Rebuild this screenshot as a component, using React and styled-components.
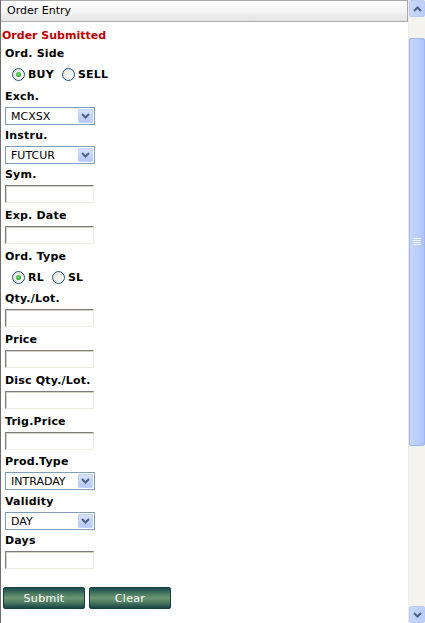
import React from 'react';
import styled, { createGlobalStyle } from 'styled-components';

const GlobalStyle = createGlobalStyle`
  html, body {
    margin: 0;
    padding: 0;
    background: #fff;
    overflow: hidden;
  }
  body {
    font-family: "DejaVu Sans", Verdana, sans-serif;
    font-size: 11px;
  }
`;

const Frame = styled.div`
  display: flex;
  width: 425px;
  height: 623px;
  overflow: hidden;
`;

const Panel = styled.div`
  flex: 1;
  display: flex;
  flex-direction: column;
  border-left: 1px solid #6d6d6d;
  min-width: 0;
`;

const Header = styled.div`
  height: 20px;
  line-height: 20px;
  padding-left: 6px;
  font-size: 11px;
  color: #000;
  background: linear-gradient(#ffffff 0%, #f4f4f4 50%, #e2e2e2 100%);
  border: 1px solid #a8a8a8;
  border-left: none;
`;

const Form = styled.div`
  display: flex;
  flex-direction: column;
  align-items: flex-start;
  padding-left: 4px;
`;

const Status = styled.div`
  margin: 7px 0 0 -3px;
  line-height: 14px;
  font-weight: bold;
  font-size: 11px;
  color: #c00000;
`;

const Label = styled.div`
  margin-top: ${p => p.$top ?? 6}px;
  line-height: 14px;
  font-weight: bold;
  letter-spacing: 0.2px;
  color: #000;
`;

const RadioRow = styled.div`
  display: flex;
  align-items: center;
  height: 16px;
  margin-top: ${p => p.$top ?? 6}px;
  padding-left: 7px;
`;

const RadioItem = styled.label`
  display: flex;
  align-items: center;
  gap: 3px;
  margin-right: 8px;
  font-weight: bold;
  letter-spacing: 0.2px;
`;

const RadioDot = styled.span`
  position: relative;
  box-sizing: border-box;
  width: 13px;
  height: 13px;
  border-radius: 50%;
  border: 1px solid #1d5281;
  background: radial-gradient(circle at 70% 70%, #ffffff 0%, #eceae3 60%, #dcd9cf 100%);
  &::after {
    content: '';
    display: ${p => (p.$checked ? 'block' : 'none')};
    position: absolute;
    left: 3px;
    top: 3px;
    width: 5px;
    height: 5px;
    border-radius: 50%;
    background: radial-gradient(circle at 40% 40%, #7be17b 0%, #2ca52c 70%, #21a121 100%);
  }
`;

const Select = styled.div`
  box-sizing: border-box;
  display: flex;
  align-items: center;
  justify-content: space-between;
  width: 90px;
  height: 18px;
  margin-top: 3px;
  border: 1px solid #7f9db9;
  background: #fff;
  padding: 1px;
`;

const SelectText = styled.span`
  padding-left: 4px;
  font-size: 11px;
  color: #000;
`;

const DropButton = styled.span`
  box-sizing: border-box;
  display: flex;
  align-items: center;
  justify-content: center;
  width: 15px;
  height: 14px;
  border-radius: 1px;
  background: linear-gradient(#d6e3fd, #b5c9f7);
  border: 1px solid #c2d2f8;
`;

const TextBox = styled.div`
  box-sizing: border-box;
  width: 89px;
  height: 18px;
  margin-top: 3px;
  background: #fff;
  border-top: 1px solid #7b7b7b;
  border-left: 1px solid #7b7b7b;
  border-right: 1px solid #ecebe3;
  border-bottom: 1px solid #ecebe3;
  box-shadow: inset 1px 1px 0 #d6d3c6;
`;

const ButtonRow = styled.div`
  display: flex;
  gap: 4px;
  margin-top: 18px;
  margin-left: -2px;
`;

const Button = styled.button`
  width: 82px;
  height: 22px;
  padding: 0;
  border: 1px solid #163e3e;
  border-radius: 2px;
  font-family: "DejaVu Sans", Verdana, sans-serif;
  font-size: 11px;
  letter-spacing: 0.3px;
  color: #fff;
  background: linear-gradient(#1c4a4d 0%, #4b7b60 30%, #6c9670 50%, #4b7b60 72%, #1a4548 100%);
  cursor: pointer;
`;

const ScrollBar = styled.div`
  width: 17px;
  display: flex;
  flex-direction: column;
  background: #f4f3ee;
  border-left: 1px solid #eeede5;
  box-sizing: border-box;
`;

const ScrollArrow = styled.div`
  box-sizing: border-box;
  height: 17px;
  display: flex;
  align-items: center;
  justify-content: center;
  border: 1px solid #b8cbf6;
  border-radius: 2px;
  background: linear-gradient(90deg, #c8d8fd, #bccefa);
`;

const Track = styled.div`
  flex: 1;
  display: flex;
  flex-direction: column;
  padding-top: 21px;
  padding-bottom: 160px;
`;

const Thumb = styled.div`
  box-sizing: border-box;
  flex: 1;
  display: flex;
  align-items: center;
  justify-content: center;
  border: 1px solid #9fb5ef;
  border-radius: 2px;
  background: linear-gradient(90deg, #c6d6fd, #b9ccfb 60%, #aec3f7);
`;

const Chevron = ({ up, color = '#4d6185' }) => (
  <svg width="9" height="6" viewBox="0 0 9 6">
    <path
      d={up ? 'M1 5 L4.5 1.5 L8 5' : 'M1 1 L4.5 4.5 L8 1'}
      fill="none"
      stroke={color}
      strokeWidth="2"
    />
  </svg>
);

const Grip = () => (
  <svg width="8" height="8" viewBox="0 0 8 8">
    {[0, 2, 4, 6].map(y => (
      <rect key={y} x="0" y={y} width="8" height="1" fill="#eef3ff" />
    ))}
  </svg>
);

const Dropdown = ({ value }) => (
  <Select>
    <SelectText>{value}</SelectText>
    <DropButton>
      <Chevron />
    </DropButton>
  </Select>
);

const Radio = ({ label, checked }) => (
  <RadioItem>
    <RadioDot $checked={checked} />
    {label}
  </RadioItem>
);

export default function App() {
  return (
    <>
      <GlobalStyle />
      <Frame>
        <Panel>
          <Header>Order Entry</Header>
          <Form>
            <Status>Order Submitted</Status>
            <Label $top={4}>Ord. Side</Label>
            <RadioRow $top={5}>
              <Radio label="BUY" checked />
              <Radio label="SELL" />
            </RadioRow>
            <Label $top={8}>Exch.</Label>
            <Dropdown value="MCXSX" />
            <Label $top={4}>Instru.</Label>
            <Dropdown value="FUTCUR" />
            <Label $top={4}>Sym.</Label>
            <TextBox />
            <Label $top={6}>Exp. Date</Label>
            <TextBox />
            <Label $top={6}>Ord. Type</Label>
            <RadioRow $top={5}>
              <Radio label="RL" checked />
              <Radio label="SL" />
            </RadioRow>
            <Label $top={7}>Qty./Lot.</Label>
            <TextBox />
            <Label $top={6}>Price</Label>
            <TextBox />
            <Label $top={6}>Disc Qty./Lot.</Label>
            <TextBox />
            <Label $top={6}>Trig.Price</Label>
            <TextBox />
            <Label $top={5}>Prod.Type</Label>
            <Dropdown value="INTRADAY" />
            <Label $top={5}>Validity</Label>
            <Dropdown value="DAY" />
            <Label $top={4}>Days</Label>
            <TextBox />
            <ButtonRow>
              <Button>Submit</Button>
              <Button>Clear</Button>
            </ButtonRow>
          </Form>
        </Panel>
        <ScrollBar>
          <ScrollArrow>
            <Chevron up />
          </ScrollArrow>
          <Track>
            <Thumb>
              <Grip />
            </Thumb>
          </Track>
          <ScrollArrow>
            <Chevron />
          </ScrollArrow>
        </ScrollBar>
      </Frame>
    </>
  );
}
